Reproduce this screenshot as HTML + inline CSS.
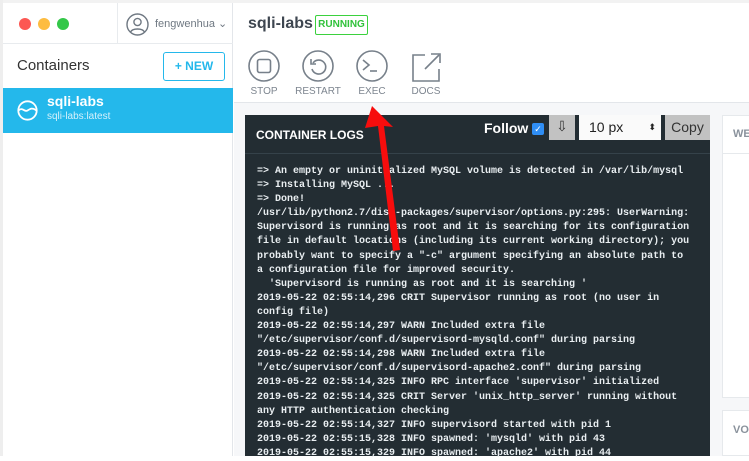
<!DOCTYPE html>
<html><head><meta charset="utf-8"><style>
*{margin:0;padding:0;box-sizing:border-box}
body{width:749px;height:456px;overflow:hidden;background:#fff;font-family:"Liberation Sans",sans-serif;position:relative}
.abs{position:absolute}
.lab{font-size:10px;color:#7d858f;position:absolute;top:86px;text-align:center;width:54px}
.log{position:absolute;left:257px;top:165px;font:10px/14.1px "Liberation Mono",monospace;font-weight:bold;color:#e9eef1;white-space:pre}
</style></head><body>
<div class="abs" style="left:0;top:0;width:749px;height:3px;background:#f2f2f2"></div>
<div class="abs" style="left:0;top:0;width:3px;height:456px;background:#eee"></div>
<div class="abs" style="left:3px;top:3px;width:230px;height:453px;background:#fff;border-right:1px solid #e3e6ea"></div>
<div class="abs" style="left:3px;top:43px;width:230px;height:1px;background:#e8ebee"></div>
<div class="abs" style="left:117px;top:3px;width:1px;height:40px;background:#e8ebee"></div>
<div class="abs" style="left:19px;top:18px;width:12px;height:12px;border-radius:50%;background:#fc5753"></div>
<div class="abs" style="left:38px;top:18px;width:12px;height:12px;border-radius:50%;background:#fdbc40"></div>
<div class="abs" style="left:57px;top:18px;width:12px;height:12px;border-radius:50%;background:#33c748"></div>
<svg class="abs" style="left:126px;top:13px" width="23" height="23" viewBox="0 0 23 23"><circle cx="11.5" cy="11.5" r="10.5" fill="none" stroke="#6f7882" stroke-width="1.4"/><circle cx="11.5" cy="9" r="3.6" fill="none" stroke="#6f7882" stroke-width="1.4"/><path d="M4.5 19c2-4 12-4 14 0" fill="none" stroke="#6f7882" stroke-width="1.4"/></svg>
<div class="abs" style="left:155px;top:17px;font-size:11px;color:#6f7882">fengwenhua ⌄</div>
<div class="abs" style="left:17px;top:57px;font-size:15px;color:#333">Containers</div>
<div class="abs" style="left:163px;top:52px;width:62px;height:29px;border:1px solid #24b8eb;border-radius:3px;color:#24b8eb;font-size:12px;font-weight:bold;line-height:27px;text-align:center">+ NEW</div>
<div class="abs" style="left:3px;top:88px;width:230px;height:45px;background:#24b8eb"></div>
<svg class="abs" style="left:17px;top:100px" width="21" height="21" viewBox="0 0 21 21"><circle cx="10.5" cy="10.5" r="9.2" fill="none" stroke="#fff" stroke-width="1.8"/><path d="M1.5 10.5c4-4 6 2 9 0s5-3 9 0" fill="none" stroke="#fff" stroke-width="1.8"/></svg>
<div class="abs" style="left:47px;top:93px;font-size:14px;font-weight:bold;color:#fff">sqli-labs</div>
<div class="abs" style="left:47px;top:111px;font-size:10px;color:#d5f1fb">sqli-labs:latest</div>
<div class="abs" style="left:248px;top:15px;font-size:16px;font-weight:bold;color:#3e4650">sqli-labs</div>
<div class="abs" style="left:315px;top:15px;width:53px;height:20px;border:1px solid #3bd13e;border-radius:2px;color:#30c23a;font-size:10px;font-weight:bold;line-height:18px;text-align:center">RUNNING</div>
<svg class="abs" style="left:247px;top:49px" width="200" height="34" viewBox="0 0 200 34">
<g fill="none" stroke="#77808a" stroke-width="1.6">
<circle cx="17" cy="17" r="15"/><rect x="10.5" y="10.5" width="13" height="13" rx="2"/>
<circle cx="71" cy="17" r="15"/><path d="M66 14a7 7 0 1 1 -1 6"/><path d="M64 10v5h5"/>
<circle cx="125" cy="17" r="15"/><path d="M116 11l6 5-6 5"/><path d="M123 22h7"/>
<path d="M178 6h-12v26h26v-12"/><path d="M178 20l14-14"/><path d="M184 5h9v9"/>
</g></svg>
<div class="lab" style="left:237px">STOP</div>
<div class="lab" style="left:291px">RESTART</div>
<div class="lab" style="left:345px">EXEC</div>
<div class="lab" style="left:399px">DOCS</div>
<div class="abs" style="left:234px;top:102px;width:515px;height:354px;background:#f6f7f9;border-top:1px solid #e3e6ea"></div>
<div class="abs" style="left:245px;top:115px;width:465px;height:341px;background:#232d33"></div>
<div class="abs" style="left:245px;top:153px;width:465px;height:1px;background:#35424a"></div>
<div class="abs" style="left:256px;top:128px;font-size:12px;font-weight:bold;color:#fff">CONTAINER LOGS</div>
<div class="abs" style="left:484px;top:120px;font-size:14px;font-weight:bold;color:#fff">Follow</div>
<div class="abs" style="left:532px;top:123px;width:12px;height:12px;background:#2f8ef5;border-radius:2px;color:#fff;font-size:9px;line-height:12px;text-align:center">✓</div>
<div class="abs" style="left:549px;top:115px;width:26px;height:25px;background:#c2c2c2;color:#333;font-size:14px;text-align:center;line-height:22px">⇩</div>
<div class="abs" style="left:579px;top:115px;width:82px;height:25px;background:#fafafa;color:#222;font-size:14px;line-height:25px;padding-left:10px">10 px<span style="position:absolute;right:5px;top:0;font-size:9px">⬍</span></div>
<div class="abs" style="left:665px;top:115px;width:45px;height:25px;background:#c2c2c2;color:#333;font-size:14px;line-height:25px;text-align:center">Copy</div>
<div class="abs" style="left:722px;top:115px;width:27px;height:283px;background:#fff;border:1px solid #e6e9ec;border-right:none"></div>
<div class="abs" style="left:722px;top:153px;width:27px;height:1px;background:#e6e9ec"></div>
<div class="abs" style="left:733px;top:128px;font-size:11px;font-weight:bold;color:#8a929c">WE</div>
<div class="abs" style="left:722px;top:410px;width:27px;height:46px;background:#fff;border:1px solid #e6e9ec;border-right:none"></div>
<div class="abs" style="left:733px;top:424px;font-size:11px;font-weight:bold;color:#8a929c">VO</div>
<div class="log">=&gt; An empty or uninitialized MySQL volume is detected in /var/lib/mysql
=&gt; Installing MySQL ...
=&gt; Done!
/usr/lib/python2.7/dist-packages/supervisor/options.py:295: UserWarning:
Supervisord is running as root and it is searching for its configuration
file in default locations (including its current working directory); you
probably want to specify a "-c" argument specifying an absolute path to
a configuration file for improved security.
  'Supervisord is running as root and it is searching '
2019-05-22 02:55:14,296 CRIT Supervisor running as root (no user in
config file)
2019-05-22 02:55:14,297 WARN Included extra file
"/etc/supervisor/conf.d/supervisord-mysqld.conf" during parsing
2019-05-22 02:55:14,298 WARN Included extra file
"/etc/supervisor/conf.d/supervisord-apache2.conf" during parsing
2019-05-22 02:55:14,325 INFO RPC interface 'supervisor' initialized
2019-05-22 02:55:14,325 CRIT Server 'unix_http_server' running without
any HTTP authentication checking
2019-05-22 02:55:14,327 INFO supervisord started with pid 1
2019-05-22 02:55:15,328 INFO spawned: 'mysqld' with pid 43
2019-05-22 02:55:15,329 INFO spawned: 'apache2' with pid 44</div>
<svg class="abs" style="left:0;top:0" width="749" height="456"><polygon points="372,106 393,127 384,126 400,250 393,251 378,126 365,128" fill="#f70d0d"/></svg>
</body></html>
